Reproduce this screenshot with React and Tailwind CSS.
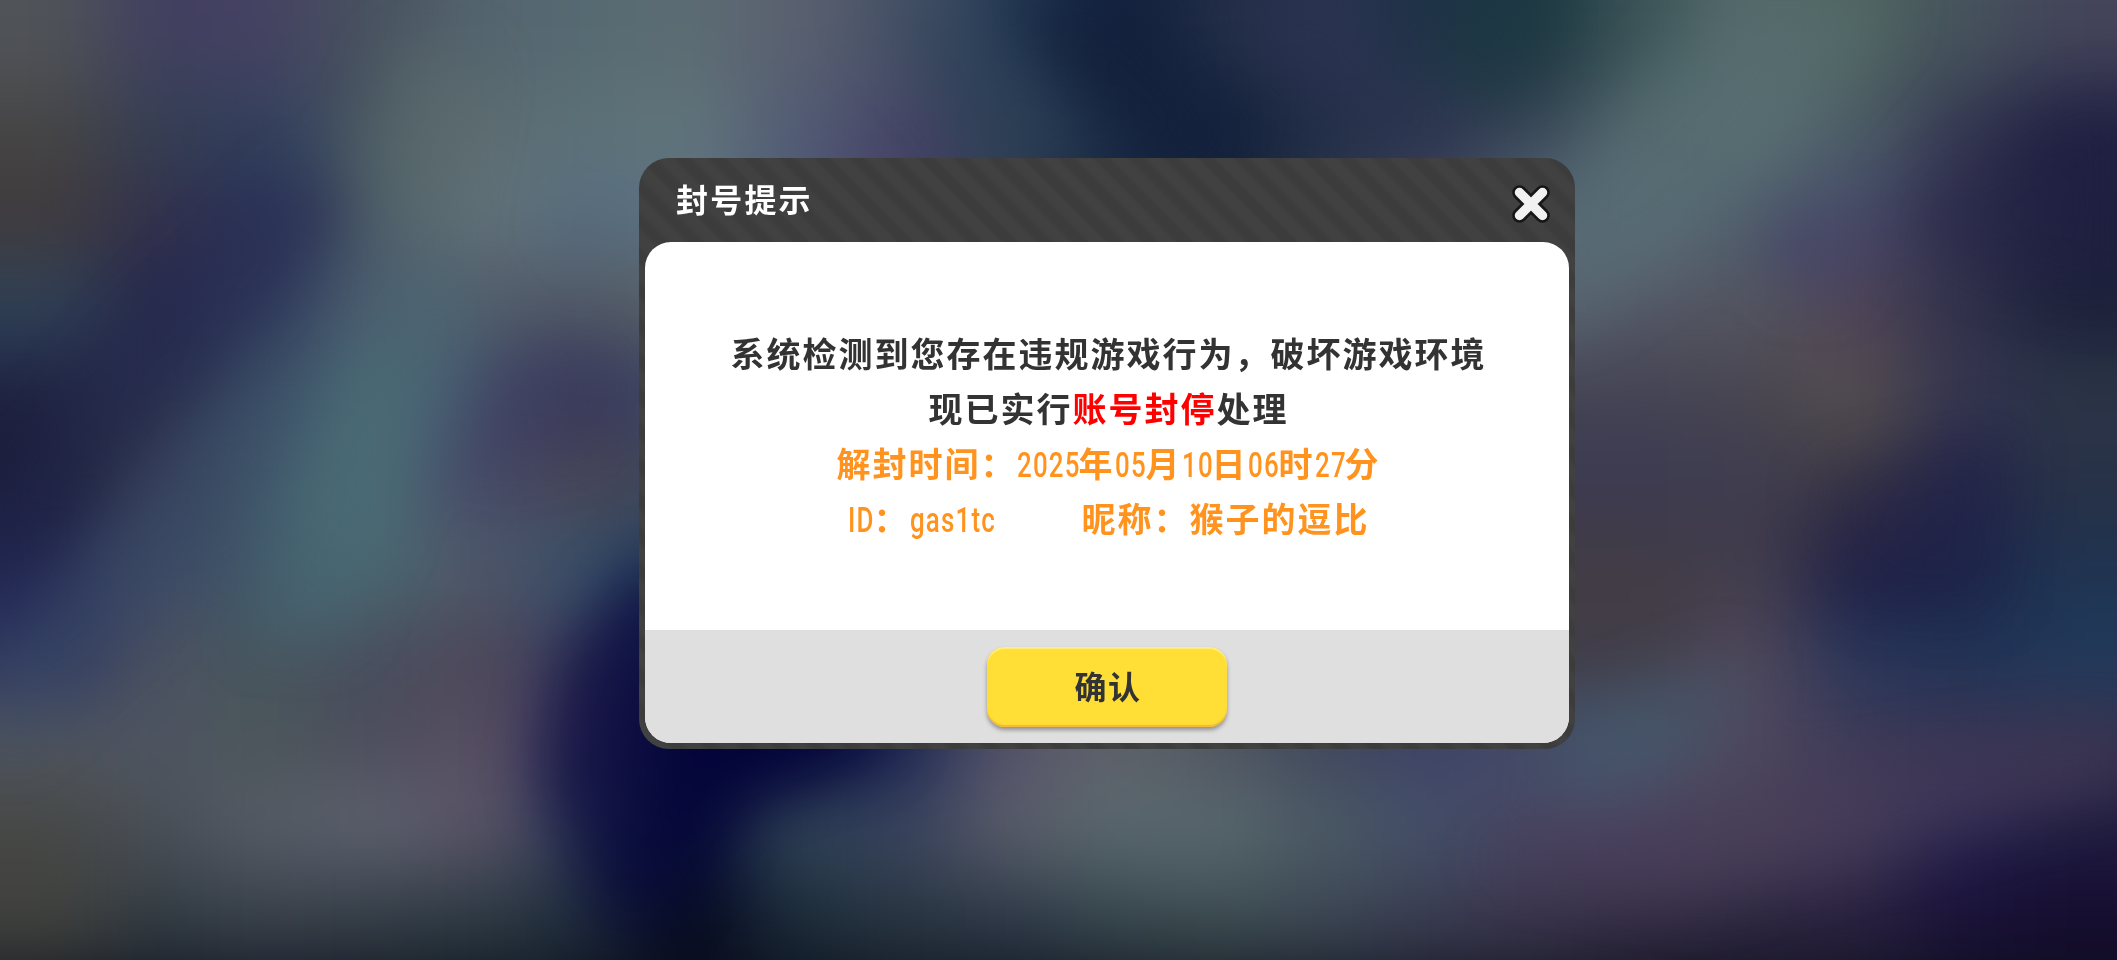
import React, { useState } from 'react'

// Backdrop colours, one row per band from top to bottom
const BACKDROP = [
  '505358 413f60 454262 48525f 54646f 566a72 5c6c73 5a6070 4a5468 253b55 12203d 202c45 2a3350 1f3247 1d3842 3c5558 55696a 50645f 45535c 44455a',
  '454545 343f52 303f5c 465560 5e6d70 5d7178 62767a 515b75 464366 2f4055 152540 14213a 1f2c45 2f3750 3c4858 52666c 5b6f72 4d5f68 333450 1f1f42',
  '403a3c 33304c 283058 4a5a68 63747a 566c80 5c7284 515b75 443f66 2f4055 152540 14213a 2f3b50 44485f 54687a 5a6a78 4e5c6c 45486a 353450 20203f',
  '2f4358 24264c 303a5c 4c5f70 525a68 525a66 5c6260 515b65 444f66 2f4055 252540 24313a 1f2c45 2f3750 5a6674 555866 545660 514356 2f304a 1b2038',
  '1f2142 282d4a 3c5068 4a6a74 45506c 35345a 3a4868 3a4868 3a4868 3a4868 3a4868 3a4868 3a4868 444353 444353 444353 48454f 554f50 363650 2c3648',
  '191c38 343a54 415a6c 4b6c74 454868 4c4654 404a5c 404a5c 404a5c 404a5c 404a5c 404a5c 404a5c 3c3a52 3c3a52 3c3a52 3e3c50 423c44 26284a 283146',
  '222652 3c4a66 41586a 4a6972 50596a 35506a 1f3a5c 1f3a5c 1f3a5c 1f3a5c 1f3a5c 1f3a5c 1f3a5c 423c44 423c44 423c44 423d4c 201f45 1c244a 1f3350',
  '2b3560 4c5260 46565f 484e5e 4c4658 3f405f 121a4a 020238 121a4a 45486a 5f6168 505560 40465c 3e4166 423d48 423d48 51475a 28365a 1f3356 203a5c',
  '525860 4e5562 4c5658 4c4c5c 584f62 3a3560 04043a 020238 1c2852 55526a 5f6168 505560 40465c 3e4166 434f6c 45566a 50485f 3f3b58 3c3654 383350',
  '454644 4b5058 575d68 5f6470 5c5468 33405a 050a38 34485a 3a4560 5c5e6a 5a6a70 5a6a70 4c5c66 44506a 4a4460 4e4460 4a4258 403854 262250 1f1c40',
  '42433f 303a42 38404a 333c46 2b3a42 202c3c 04081f 1a2a38 283540 2c3848 36464c 3c4c50 3c4654 3a3c50 3a344c 342c44 2c2540 2a2140 1a1138 150c30',
].map((row) => row.split(' '))

// Slanted streaks laid over the bands
const STREAKS = [
  { points: '300,170 380,190 120,470 0,560 0,470 130,330', fill: '#262a50', opacity: 0.4 },
  { points: '430,240 500,330 400,480 340,640 250,640 300,460 360,360', fill: '#4b6e76', opacity: 0.42 },
  { points: '200,400 300,420 130,640 0,760 0,640', fill: '#3c4e68', opacity: 0.4 },
  { points: '400,40 480,60 450,220 360,240 350,160', fill: '#60706f', opacity: 0.4 },
  { points: '470,350 620,350 600,440 480,470', fill: '#38385c', opacity: 0.35 },
  { points: '560,660 640,560 900,740 740,800 640,940 590,900 540,780', fill: '#020238', opacity: 0.6 },
  { points: '860,0 930,0 1180,170 1000,170', fill: '#2c4058', opacity: 0.4 },
  { points: '1010,0 1130,0 1260,160 1130,170', fill: '#12203c', opacity: 0.6 },
  { points: '1200,0 1330,0 1480,150 1400,160', fill: '#2c3352', opacity: 0.5 },
  { points: '1440,0 1560,0 1510,110 1440,80', fill: '#1c3843', opacity: 0.6 },
  { points: '1720,0 1900,0 1700,240 1560,330 1560,180', fill: '#587073', opacity: 0.5 },
  { points: '2117,90 2117,300 2000,270 1900,220', fill: '#1f1f45', opacity: 0.45 },
  { points: '1800,210 1850,240 1845,290 1790,290 1765,250', fill: '#423f6a', opacity: 0.5 },
  { points: '1560,720 1740,650 1740,720 1560,810', fill: '#455a6e', opacity: 0.5 },
  { points: '1820,480 2010,430 1990,610 1860,600', fill: '#1d1d46', opacity: 0.4 },
  { points: '1480,860 1800,770 2117,730 2117,790 1700,900', fill: '#4a405c', opacity: 0.5 },
]

function Backdrop() {
  return (
    <svg className="absolute inset-0 h-full w-full" viewBox="0 0 2117 960" preserveAspectRatio="none">
      <defs>
        <filter id="soften" filterUnits="userSpaceOnUse" x="-200" y="-200" width="2520" height="1360" colorInterpolationFilters="sRGB">
          <feGaussianBlur stdDeviation="42" />
        </filter>
        <filter id="streak" filterUnits="userSpaceOnUse" x="-200" y="-200" width="2520" height="1360" colorInterpolationFilters="sRGB">
          <feGaussianBlur stdDeviation="28" />
        </filter>
      </defs>
      <g filter="url(#soften)">
        <rect x="-200" y="-200" width="2520" height="1360" fill="#30394f" />
        {BACKDROP.map((row, r) =>
          row.map((color, c) => {
            const left = c === 0 ? -200 : c * 106
            const right = c === row.length - 1 ? 2320 : (c + 1) * 106 + 1
            const top = r === 0 ? -200 : r * 87.3
            const bottom = r === BACKDROP.length - 1 ? 990 : (r + 1) * 87.3 + 1
            return <rect key={`${r}-${c}`} x={left} y={top} width={right - left} height={bottom - top} fill={`#${color}`} />
          })
        )}
        {/* Floor shadow */}
        <rect x="-200" y="970" width="2520" height="200" fill="#0c0f1a" />
      </g>
      <g filter="url(#streak)">
        {STREAKS.map((s) => (
          <polygon key={s.points} points={s.points} fill={s.fill} opacity={s.opacity} />
        ))}
      </g>
    </svg>
  )
}

// Narrow latin text squeezed into a fixed advance width
function Narrow({ children, className }) {
  return (
    <span className={`inline-flex justify-start ${className}`}>
      <span className="inline-block origin-left translate-y-[3px] scale-x-[0.74] font-['Roboto'] text-[35px] font-medium tracking-[1.6px]">{children}</span>
    </span>
  )
}

function CloseIcon() {
  return (
    <svg className="h-10 w-10" viewBox="0 0 40 40" fill="none" strokeLinecap="round">
      <path d="M8.5 8.5 31.5 31.5M31.5 8.5 8.5 31.5" stroke="#161616" strokeWidth="14.5" />
      <path d="M8.5 8.5 31.5 31.5M31.5 8.5 8.5 31.5" stroke="#f1f1f1" strokeWidth="9.5" />
    </svg>
  )
}

export default function App() {
  const [open, setOpen] = useState(true)

  return (
    <div className="relative h-[960px] w-full overflow-hidden bg-[#30394f] pt-[158px] pl-[639px] font-['Noto_Sans_CJK_SC',sans-serif]">
      <Backdrop />

      {open && (
        <div className="relative flex h-[591px] w-[936px] flex-col rounded-[30px] bg-[#404040] bg-[repeating-linear-gradient(45deg,#3c3c3c_0px,#3c3c3c_7px,#414141_12px,#414141_20px,#3c3c3c_24.7px)] px-[6px] pb-[6px]">
          {/* Title bar */}
          <header className="flex h-[84px] shrink-0 items-center justify-between pr-[18px] pl-[31px]">
            <h1 className="pb-[5px] text-[32px] leading-none font-bold tracking-[2.2px] text-white">封号提示</h1>
            <button onClick={() => setOpen(false)} aria-label="关闭" className="pt-[7px]">
              <CloseIcon />
            </button>
          </header>

          <div className="flex grow flex-col overflow-hidden rounded-[26px] bg-white">
            {/* Message */}
            <div className="flex h-[388px] flex-col items-center pt-[83px] pl-[3px] text-[34px] leading-[55px] font-bold tracking-[2px] whitespace-nowrap text-[#333]">
              <p>系统检测到您存在违规游戏行为，破坏游戏环境</p>
              <p>
                现已实行<span className="text-[#ff0000]">账号封停</span>处理
              </p>
              <p className="flex text-[#ff931e]">
                解封时间：<Narrow className="w-[62px]">2025</Narrow>年<Narrow className="w-[31px]">05</Narrow>月
                <Narrow className="w-[30px]">10</Narrow>日<Narrow className="w-[31px]">06</Narrow>时
                <Narrow className="w-[30px]">27</Narrow>分
              </p>
              <p className="flex text-[#ff931e]">
                <Narrow className="w-[26px]">ID</Narrow>：<Narrow className="mr-[86px] w-[86px]">gas1tc</Narrow>
                昵称：猴子的逗比
              </p>
            </div>

            {/* Actions */}
            <footer className="flex grow justify-center bg-[#dfdfdf] pt-[17px]">
              <button
                onClick={() => setOpen(false)}
                className="h-[80px] w-[240px] rounded-[18px] bg-[#ffde35] pb-[5px] pl-[2px] text-[32px] font-bold tracking-[1.5px] text-[#333] shadow-[0_3px_4px_rgba(0,0,0,0.35),inset_0_2px_1px_#ffee80,inset_0_-2px_1px_#f5b83a]"
              >
                确认
              </button>
            </footer>
          </div>
        </div>
      )}
    </div>
  )
}
